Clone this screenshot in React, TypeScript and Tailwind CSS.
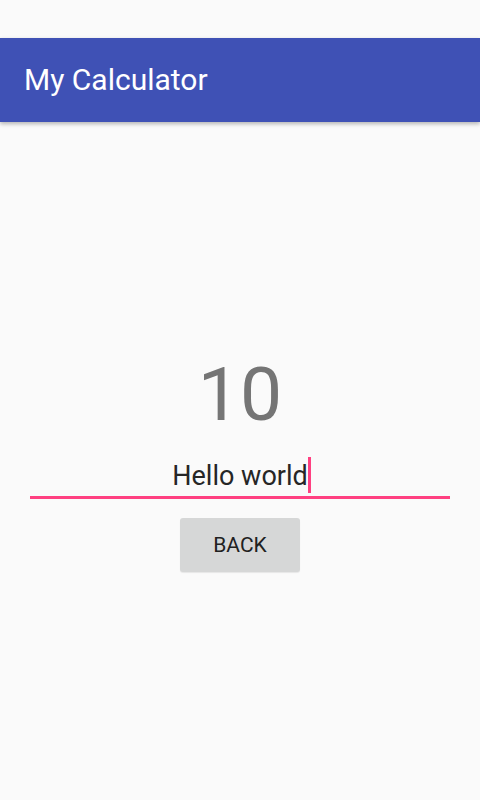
import React from "react";

export default function App() {
  return (
    <div
      className="flex h-[800px] w-[480px] flex-col bg-[#fafafa]"
      style={{ fontFamily: "Roboto, 'Noto Sans', sans-serif" }}
    >
      {/* Status bar space */}
      <div className="h-[38px] shrink-0" />

      {/* App bar */}
      <div className="relative z-10 flex h-[84px] shrink-0 items-center bg-[#3f51b5] pl-[24px] shadow-[0_2px_4px_rgba(0,0,0,0.28)]">
        <h1 className="text-[30px] leading-[36px] font-normal text-white">
          My Calculator
        </h1>
      </div>

      {/* Content */}
      <div className="flex flex-col items-center pt-[235px]">
        <p className="text-[75px] leading-[75px] text-[#757575]">10</p>

        <div className="mt-[26px] w-[420px] border-b-[3px] border-[#ff4081] pb-[2px] text-center">
          <span className="relative text-[27px] leading-[36px] text-[#262626]">
            Hello world
            <span className="absolute left-full top-[-3px] h-[36px] w-[3px] bg-[#ff4081]" />
          </span>
        </div>

        <button className="mt-[19px] h-[54px] w-[120px] rounded-[3px] bg-[#d6d7d7] pt-[2px] text-[21px] text-[#212121] shadow-[0_1px_1px_rgba(0,0,0,0.08)]">
          BACK
        </button>
      </div>
    </div>
  );
}
